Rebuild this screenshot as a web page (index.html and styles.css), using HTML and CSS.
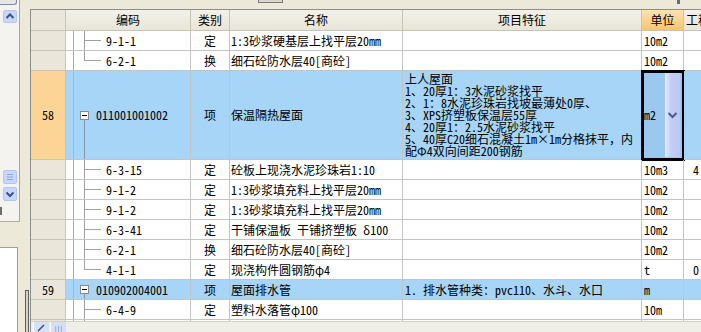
FILE: index.html
```html
<!DOCTYPE html>
<html lang="zh">
<head>
<meta charset="utf-8">
<title>清单</title>
<link rel="stylesheet" href="styles.css">
</head>
<body>
<div class="side">
  <div class="side-panel">
    <div class="side-cap"></div>
    <div class="sbtn up"><svg width="14" height="13" viewBox="0 0 14 13"><polyline points="3.5,8 7,4.5 10.5,8" fill="none" stroke="#3E5280" stroke-width="2"/></svg></div>
    <div class="side-track"></div>
    <div class="sbtn menu"><svg width="14" height="14" viewBox="0 0 14 14"><path d="M4 4.5h6M4 7h6M4 9.5h6" stroke="#8FA6D6" stroke-width="1"/></svg></div>
    <div class="sbtn down"><svg width="14" height="14" viewBox="0 0 14 14"><polyline points="3.5,5.5 7,9 10.5,5.5" fill="none" stroke="#3E5280" stroke-width="2"/></svg></div>
    <div class="side-foot"><span class="side-mark"></span></div>
  </div>
  <div class="side-lower"><div class="side-white"></div></div>
</div>
<div class="splitter"><div class="grip"></div></div>
<div class="main">
  <div class="toolbar"><span class="tb-btn"></span><span class="tb-mark"></span></div>
  <div class="grid">
    <div class="grid-body">
      <div class="row head">
        <div class="num"></div><div>编码</div><div>类别</div><div>名称</div><div>项目特征</div><div class="hu">单位</div><div class="hg">工程量表达式</div>
      </div>
      <div class="row">
        <div class="num"></div><div class="code mid">9-1-1</div><div class="type">定</div><div class="name">1:3砂浆硬基层上找平层20mm</div><div class="feat"></div><div class="unit">10m2</div><div class="gong"></div>
      </div>
      <div class="row">
        <div class="num"></div><div class="code last">6-2-1</div><div class="type">换</div><div class="name">细石砼防水层40[商砼]</div><div class="feat"></div><div class="unit">10m2</div><div class="gong"></div>
      </div>
      <div class="row sel tall">
        <div class="num hot">58</div><div class="code item"><span class="box"></span>011001001002</div><div class="type">项</div><div class="name">保温隔热屋面</div><div class="feat multi">上人屋面<br>1、20厚1：3水泥砂浆找平<br>2、1：8水泥珍珠岩找坡最薄处0厚、<br>3、XPS挤塑板保温层55厚<br>4、20厚1：2.5水泥砂浆找平<br>5、40厚C20细石混凝土1m×1m分格抹平，内<br>配Φ4双向间距200钢筋</div><div class="unit edit"><span class="ev">m2</span><span class="dd"><svg width="15" height="8" viewBox="0 0 15 8"><polyline points="3.5,2 7.5,6 11.5,2" fill="none" stroke="#4A5E8C" stroke-width="2"/></svg></span></div><div class="gong"></div>
      </div>
      <div class="row">
        <div class="num"></div><div class="code mid">6-3-15</div><div class="type">定</div><div class="name">砼板上现浇水泥珍珠岩1:10</div><div class="feat"></div><div class="unit">10m3</div><div class="gong">4</div>
      </div>
      <div class="row">
        <div class="num"></div><div class="code mid">9-1-2</div><div class="type">定</div><div class="name">1:3砂浆填充料上找平层20mm</div><div class="feat"></div><div class="unit">10m2</div><div class="gong"></div>
      </div>
      <div class="row">
        <div class="num"></div><div class="code mid">9-1-2</div><div class="type">定</div><div class="name">1:3砂浆填充料上找平层20mm</div><div class="feat"></div><div class="unit">10m2</div><div class="gong"></div>
      </div>
      <div class="row">
        <div class="num"></div><div class="code mid">6-3-41</div><div class="type">定</div><div class="name">干铺保温板 干铺挤塑板 δ100</div><div class="feat"></div><div class="unit">10m2</div><div class="gong"></div>
      </div>
      <div class="row">
        <div class="num"></div><div class="code mid">6-2-1</div><div class="type">换</div><div class="name">细石砼防水层40[商砼]</div><div class="feat"></div><div class="unit">10m2</div><div class="gong"></div>
      </div>
      <div class="row">
        <div class="num"></div><div class="code last">4-1-1</div><div class="type">定</div><div class="name">现浇构件圆钢筋φ4</div><div class="feat"></div><div class="unit">t</div><div class="gong">0</div>
      </div>
      <div class="row sel">
        <div class="num">59</div><div class="code item"><span class="box"></span>010902004001</div><div class="type">项</div><div class="name">屋面排水管</div><div class="feat">1. 排水管种类：pvc110、水斗、水口</div><div class="unit">m</div><div class="gong"></div>
      </div>
      <div class="row">
        <div class="num"></div><div class="code mid">6-4-9</div><div class="type">定</div><div class="name">塑料水落管φ100</div><div class="feat"></div><div class="unit">10m</div><div class="gong"></div>
      </div>
      <div class="row">
        <div class="num"></div><div class="code mid">6-4-12</div><div class="type">定</div><div class="name">塑料水斗φ100</div><div class="feat"></div><div class="unit">10只</div><div class="gong"></div>
      </div>
    </div>
    <div class="hscroll">
      <span class="hb"><svg width="15" height="10" viewBox="0 0 15 10"><path d="M4 9 L10 3" stroke="#2F4A80" stroke-width="1.5"/></svg></span>
      <span class="hb"><svg width="16" height="10" viewBox="0 0 16 10"><path d="M5 4v6M8 4v6M11 4v6" stroke="#8FA6D6" stroke-width="1"/></svg></span>
    </div>
  </div>
</div>
</body>
</html>
```
FILE: styles.css
```css
html, body {
  margin: 0;
  padding: 0;
}
body {
  width: 701px;
  height: 332px;
  overflow: hidden;
  display: flex;
  background: #ECE9D8;
  font-family: "Noto Sans Mono CJK SC", "Noto Sans CJK SC", sans-serif;
  font-size: 12px;
  line-height: 14px;
  color: #000;
}

/* left side panel */
.side {
  width: 20px;
  display: flex;
  flex-direction: column;
  flex-shrink: 0;
}
.side-panel {
  height: 222px;
  box-sizing: border-box;
  border-right: 1px solid #9AA8B8;
  border-bottom: 1px solid #A9A9A9;
  background: #F4F3EF;
  display: flex;
  flex-direction: column;
}
.side-cap {
  width: 17px;
  height: 5px;
  box-sizing: border-box;
  border-right: 1px solid #7D8C9F;
  border-bottom: 1px solid #7D8C9F;
  border-bottom-right-radius: 3px;
  background: #E6E6E6;
}
.sbtn {
  width: 14px;
  margin-left: 3px;
  box-sizing: border-box;
  border: 1px solid #B4C6EE;
  border-radius: 2px;
  background: #C6D6FC;
  display: flex;
}
.sbtn svg { display: block; margin: -1px; }
.up { height: 13px; margin-top: 5px; }
.side-track { flex: 1; }
.menu { height: 14px; }
.down { height: 14px; margin-top: 3px; }
.side-foot {
  height: 20px;
  display: flex;
  align-items: flex-start;
}
.side-mark {
  width: 2px;
  height: 8px;
  margin-top: 6px;
  background: #6E6E6E;
}
.side-lower {
  flex: 1;
  display: flex;
  flex-direction: column;
  background: #ECE9D8;
}
.side-white {
  flex: 1;
  margin-top: 25px;
  width: 18px;
  box-sizing: border-box;
  background: #FFFFFF;
  border-top: 1px solid #A0A0A0;
  border-right: 1px solid #A0A0A0;
}

/* splitter between panel and grid */
.splitter {
  width: 10px;
  flex-shrink: 0;
  display: flex;
  flex-direction: column;
  justify-content: flex-end;
}
.grip {
  width: 4px;
  height: 42px;
  margin-left: 5px;
  box-sizing: border-box;
  border: 1px solid #5E5E5E;
  border-bottom: 0;
  background: #D6D3C6;
}

/* main grid area */
.main {
  flex: 1;
  display: flex;
  flex-direction: column;
  min-width: 0;
}
.toolbar {
  height: 9px;
  display: flex;
  align-items: flex-start;
}
.tb-btn {
  width: 25px;
  height: 3px;
  margin-left: 228px;
  box-sizing: border-box;
  border: 1px solid #7A7A7A;
  border-top: 0;
  background: #D9D5C8;
}
.tb-mark {
  width: 3px;
  height: 4px;
  margin-left: 394px;
  background: #6A6A6A;
}
.grid {
  flex: 1;
  display: flex;
  flex-direction: column;
  border-top: 1px solid #8C8C8C;
  border-left: 1px solid #8C8C8C;
  min-height: 0;
}
.grid-body {
  flex: 1;
  overflow: hidden;
  background: #FFFFFF;
}
.row {
  display: grid;
  grid-template-columns: 35px 125px 39px 173px 239px 42px 76px;
  height: 20px;
}
.row > div {
  box-sizing: border-box;
  border-right: 1px solid #C4C4C4;
  border-bottom: 1px solid #C4C4C4;
  white-space: nowrap;
  overflow: hidden;
  display: flex;
  align-items: center;
}
.row.tall { height: 89px; }
.row.head { height: 21px; }
.head > div {
  justify-content: center;
  background: linear-gradient(#F3F1E8, #E8E5D8);
  border-color: #C8C4B4;
}
.head > div.hu {
  background: linear-gradient(#FDE3AE, #F7C46F);
}
.head > div.hg {
  justify-content: flex-start;
  padding-left: 2px;
}
.row > .num {
  justify-content: center;
  background: #EAE6DA;
  border-color: #C9C5B6;
}
.row > .num.hot { background: #FCD596; }
.type { justify-content: center; }
.name { padding-left: 1px; }
.feat { padding-left: 2px; }
.unit { padding-left: 2px; }
.gong { padding-left: 9px; }

.row > .feat.multi {
  display: block;
  padding-top: 2px;
  line-height: 12px;
}

/* tree column */
.code { padding-left: 40px; }
.code.mid {
  background:
    linear-gradient(#A8A8A8, #A8A8A8) 7px 0 / 1px 100% no-repeat,
    linear-gradient(#A0A0A0, #A0A0A0) 18px 0 / 1px 100% no-repeat,
    linear-gradient(#A0A0A0, #A0A0A0) 18px 50% / 17px 1px no-repeat,
    #FFFFFF;
}
.code.last {
  background:
    linear-gradient(#A8A8A8, #A8A8A8) 7px 0 / 1px 100% no-repeat,
    linear-gradient(#A0A0A0, #A0A0A0) 18px 0 / 1px 50% no-repeat,
    linear-gradient(#A0A0A0, #A0A0A0) 18px 50% / 17px 1px no-repeat,
    #FFFFFF;
}
.code.item {
  padding-left: 14px;
  background:
    linear-gradient(#9FB9CF, #9FB9CF) 7px 0 / 1px 100% no-repeat,
    linear-gradient(#7E97AE, #7E97AE) 18px 100% / 1px calc(50% - 4px) no-repeat,
    #A6D5F7;
}
.box {
  width: 9px;
  height: 9px;
  box-sizing: border-box;
  margin-right: 7px;
  border: 1px solid #8A8A8A;
  background: linear-gradient(#000, #000) center / 5px 1px no-repeat, #FFFFFF;
  flex-shrink: 0;
}

/* selected rows */
.sel > div:not(.num) { background-color: #A6D5F7; }

/* in-place editor of the unit cell */
.row > .unit.edit {
  padding: 0;
  outline: 3px solid #000;
  outline-offset: -2px;
  background: #9CC7EF;
  overflow: visible;
  align-items: stretch;
}
.ev {
  display: flex;
  align-items: center;
  padding-left: 2px;
  flex: 1;
}
.dd {
  width: 15px;
  margin: 2px 3px 2px 0;
  display: flex;
  align-items: center;
  background: linear-gradient(to right, #E6EBFC, #C3CDF5 40%, #BCC7F2);
}
.dd svg { display: block; }

/* bottom scroll strip */
.hscroll {
  height: 10px;
  display: flex;
  background: #EFEEE7;
  border-top: 1px solid #D4D0C4;
}
.hb {
  width: 15px;
  height: 10px;
  margin-left: 1px;
  background: #D5E0F7;
  border-left: 1px solid #FFFFFF;
  display: flex;
}
.hb:first-child { margin-left: 2px; }
.hb svg { display: block; }
```
